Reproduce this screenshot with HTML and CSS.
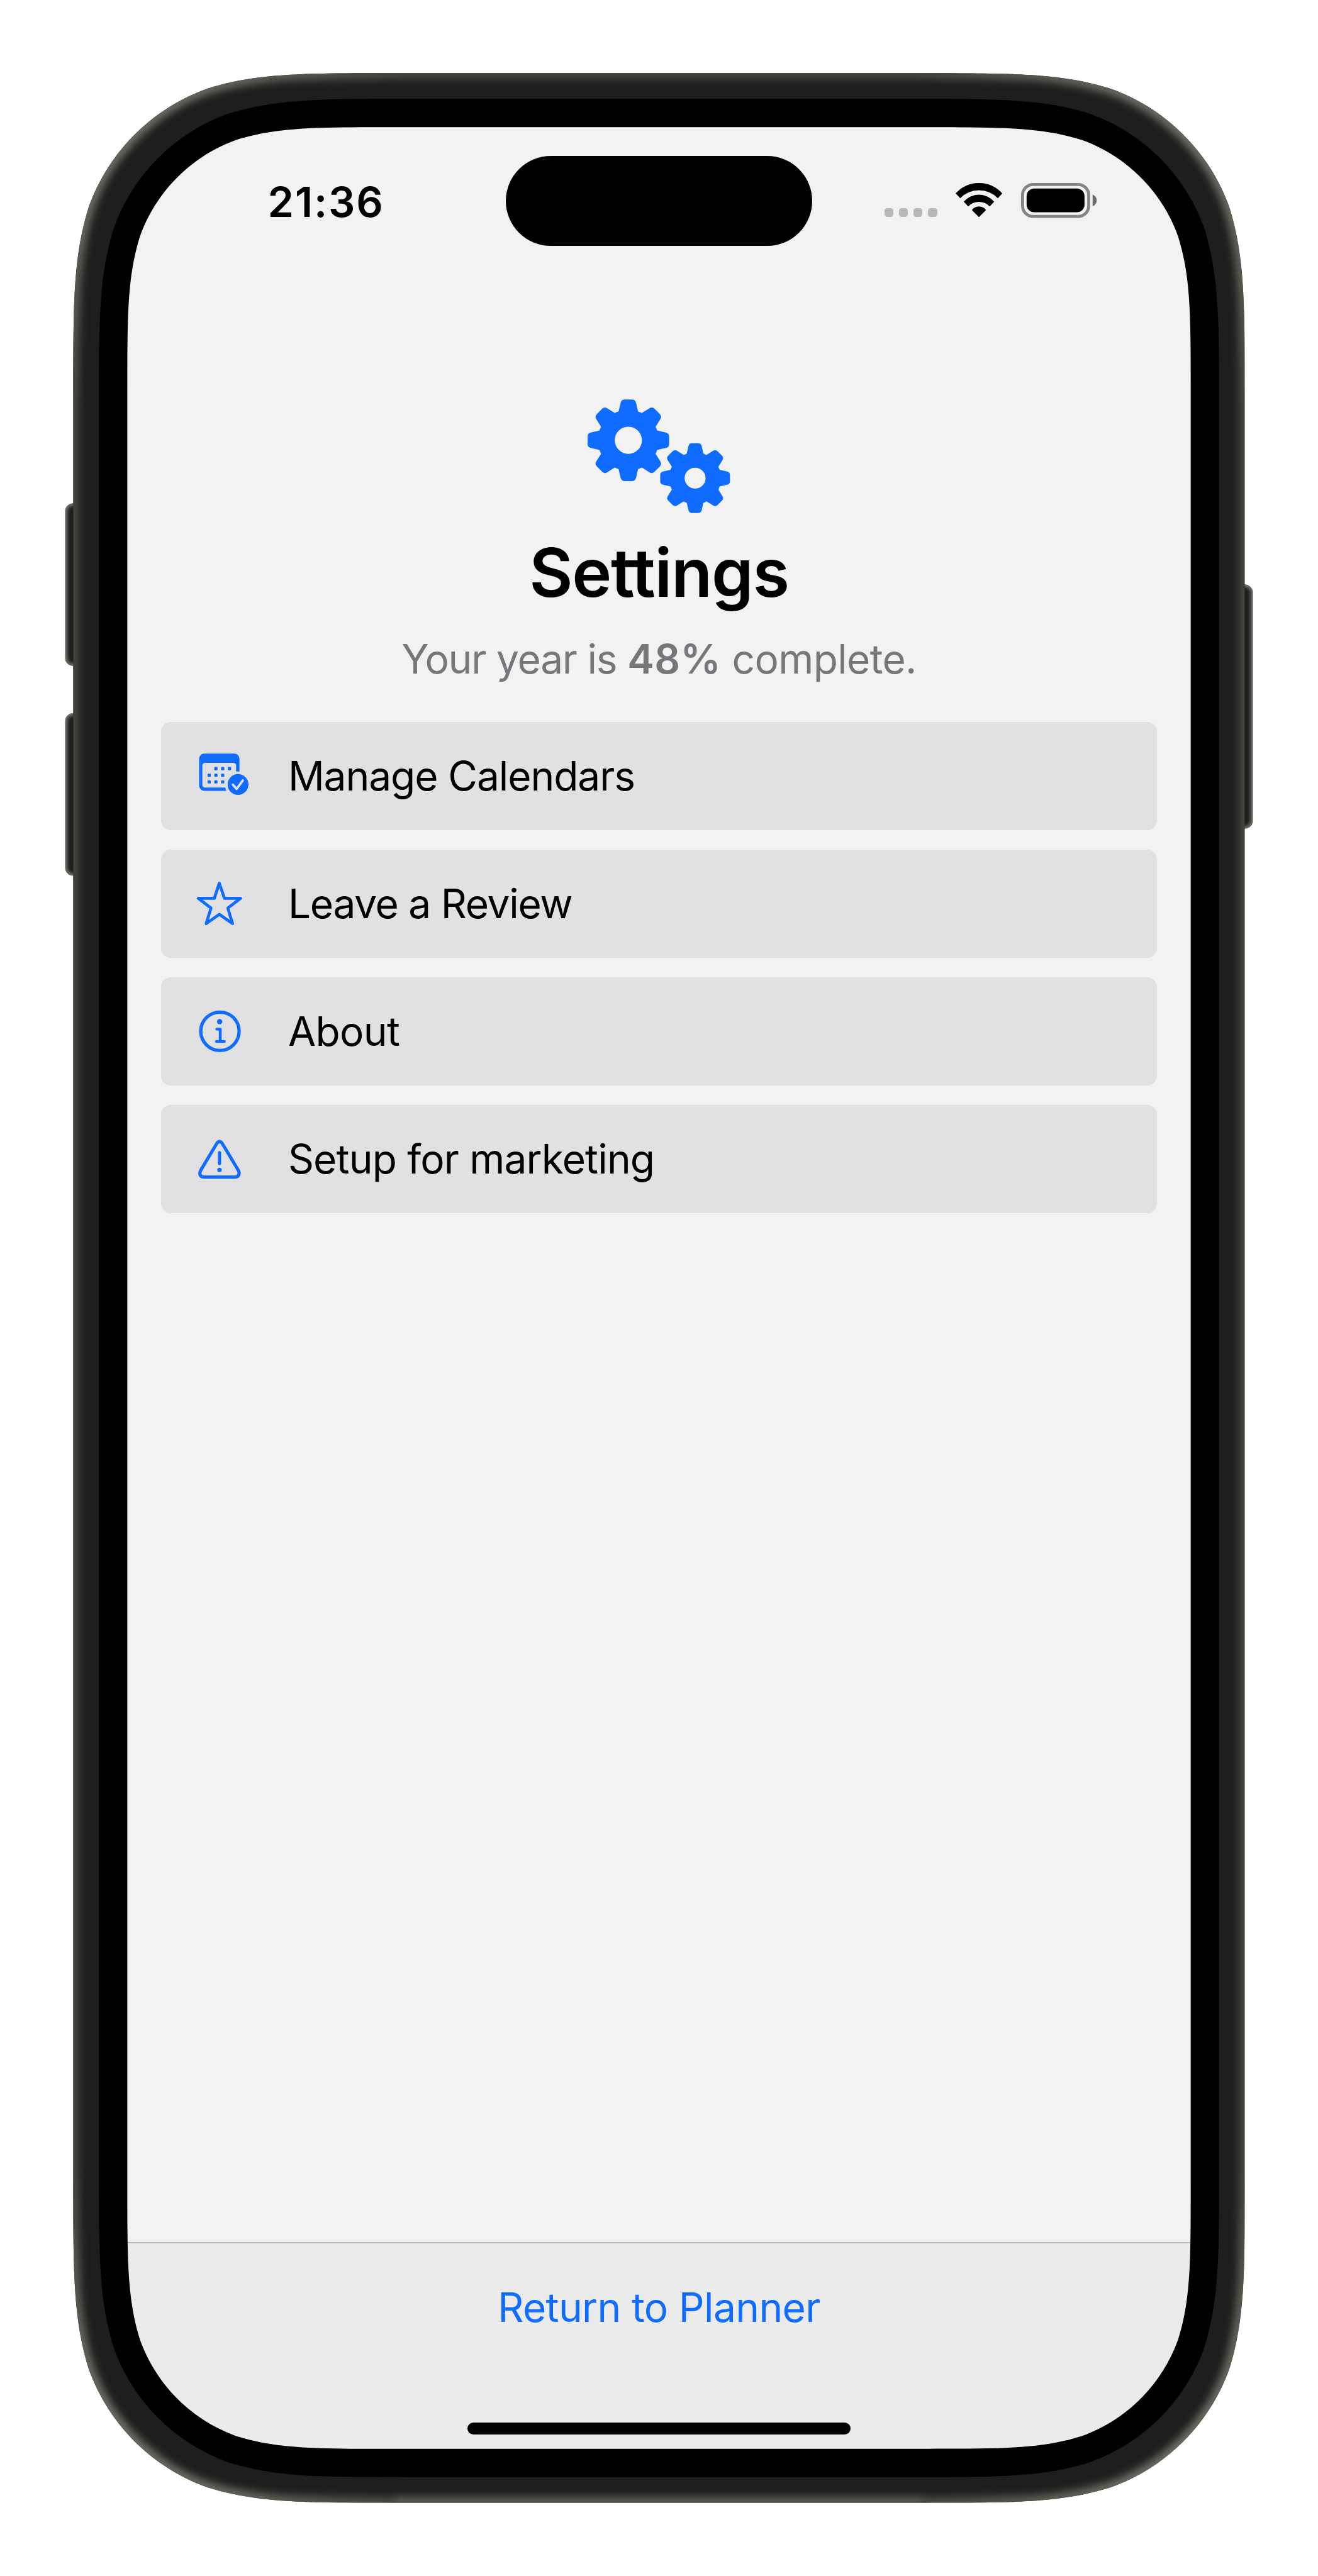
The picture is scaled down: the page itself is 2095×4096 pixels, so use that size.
FILE: index.html
```html
<!DOCTYPE html>
<html lang="en">
<head>
<meta charset="utf-8">
<title>Settings</title>
<link rel="stylesheet" href="styles.css">
</head>
<body>
<div class="device">
  <main class="screen">
    <header class="status-bar">
      <span class="time">21:36</span>
      <span class="island"></span>
      <span class="indicators">
        <span class="signal"><i></i><i></i><i></i><i></i></span>
        <svg class="wifi" viewBox="509 60 344 252">
          <path d="M509,137A230.6,230.6 0 0 1 853,137L820,172A194,194 0 0 0 543,172Z"/>
          <path d="M569,198A146.6,146.6 0 0 1 793,198L760,233A108.8,108.8 0 0 0 602,233Z"/>
          <path d="M629,260A63.6,63.6 0 0 1 733,260L681,312Z"/>
        </svg>
        <svg class="battery" viewBox="990 60 558 258">
          <rect x="1001" y="71" width="488" height="236" rx="78" fill="none" stroke="#848484" stroke-width="22"/>
          <rect x="1031" y="101" width="427" height="175" rx="56"/>
          <path d="M1518,146Q1548,160 1548,189T1518,232Z" fill="#6a6a6a"/>
        </svg>
      </span>
    </header>

    <section class="hero">
      <svg class="gears" viewBox="132 97 1051 840">
        <defs>
          <path id="tooth" d="M-72,-212L-57,-277Q-51,-301 -27,-301H27Q51,-301 57,-277L72,-212L60,-150H-60Z"/>
          <g id="teeth">
            <use href="#tooth"/><use href="#tooth" transform="rotate(45)"/><use href="#tooth" transform="rotate(90)"/><use href="#tooth" transform="rotate(135)"/><use href="#tooth" transform="rotate(180)"/><use href="#tooth" transform="rotate(225)"/><use href="#tooth" transform="rotate(270)"/><use href="#tooth" transform="rotate(315)"/>
          </g>
        </defs>
        <g transform="translate(432.5 399)"><use href="#teeth"/><circle class="ring" r="162" stroke-width="124"/></g>
        <g transform="translate(925 678.5)"><use href="#teeth" transform="scale(.855)"/><circle class="ring" r="134" stroke-width="114"/></g>
      </svg>
      <h1 class="title">Settings</h1>
      <p class="subtitle"><span>Your year is </span><b>48%</b> complete.</p>
    </section>

    <nav class="menu">
      <a class="row">
        <svg class="icon" viewBox="30 27 420 360">
          <path d="M358,174V80A38,38 0 0 0 320,42H98A38,38 0 0 0 60,80V279A38,38 0 0 0 98,317H262L252,293H104A20,20 0 0 1 84,273V130A20,20 0 0 1 104,110H313A20,20 0 0 1 333,130V174Z"/>
          <g>
            <rect x="172" y="141" width="24" height="24" rx="6"/><rect x="222" y="141" width="24" height="24" rx="6"/><rect x="272" y="141" width="24" height="24" rx="6"/>
            <rect x="122" y="190" width="24" height="24" rx="6"/><rect x="172" y="190" width="24" height="24" rx="6"/><rect x="222" y="190" width="24" height="24" rx="6"/>
            <rect x="122" y="239" width="24" height="24" rx="6"/><rect x="172" y="239" width="24" height="24" rx="6"/><rect x="222" y="239" width="24" height="24" rx="6"/>
          </g>
          <circle cx="347" cy="270" r="77"/>
          <path class="tick" d="M309,271L337,303L383,240"/>
        </svg>
        <span class="label calendars">Manage Calendars</span>
      </a>
      <a class="row">
        <svg class="icon" viewBox="30 969 420 360">
          <path class="line" stroke-width="22" d="M209,999L247,1110H366L272,1182L307,1297L209,1228L112,1297L148,1182L54,1110H172Z"/>
        </svg>
        <span class="label review">Leave a Review</span>
      </a>
      <a class="row">
        <svg class="icon" viewBox="480 2477 140 120">
          <circle class="line" cx="541.3" cy="2537" r="47.2" stroke-width="8.2"/>
          <circle cx="540.5" cy="2513.5" r="6.6"/>
          <path class="line" stroke-width="7" d="M533.5,2531.5H542V2562M532.5,2562H552"/>
        </svg>
        <span class="label about">About</span>
      </a>
      <a class="row">
        <svg class="icon" viewBox="480 2791 140 120">
          <path class="line" stroke-width="8" d="M533.5,2813Q540.2,2803.5 547,2813L586.5,2879C591,2888 587,2895.6 579,2895.6H501.5C493,2895.6 489,2888 494,2879Z"/>
          <path class="line" stroke-width="8" d="M540.2,2835.5V2862"/>
          <circle cx="540.2" cy="2878" r="5.5"/>
        </svg>
        <span class="label marketing">Setup for marketing</span>
      </a>
    </nav>

    <footer class="toolbar">
      <a class="return">Return to Planner</a>
      <span class="home-indicator"></span>
    </footer>
  </main>

  <svg class="frame" viewBox="0 0 3240 6336" preserveAspectRatio="none">
    <defs>
      <path id="body" d="M971.8,180H2268.2c228,0 342,0 464.7,38.8c134,48.8 239.5,154.3 288.3,288.3c38.8,122.7 38.8,236.7 38.8,464.7V5364.2c0,228 0,342 -38.8,464.7c-48.8,134 -154.3,239.5 -288.3,288.3c-122.7,38.8 -236.7,38.8 -464.7,38.8H971.8c-228,0 -342,0 -464.7,-38.8c-134,-48.8 -239.5,-154.3 -288.3,-288.3c-38.8,-122.7 -38.8,-236.7 -38.8,-464.7V971.8c0,-228 0,-342 38.8,-464.7c48.8,-134 154.3,-239.5 288.3,-288.3c122.7,-38.8 236.7,-38.8 464.7,-38.8z"/>
      <path id="glass" d="M958.1,313H2281.9c185.8,0 278.6,0 378.6,31.6c109.2,39.7 195.2,125.7 234.9,234.9c31.6,100 31.6,192.8 31.6,378.6V5377.9c0,185.8 0,278.6 -31.6,378.6c-39.7,109.2 -125.7,195.2 -234.9,234.9c-100,31.6 -192.8,31.6 -378.6,31.6H958.1c-185.8,0 -278.6,0 -378.6,-31.6c-109.2,-39.7 -195.2,-125.7 -234.9,-234.9c-31.6,-100 -31.6,-192.8 -31.6,-378.6V958.1c0,-185.8 0,-278.6 31.6,-378.6c39.7,-109.2 125.7,-195.2 234.9,-234.9c100,-31.6 192.8,-31.6 378.6,-31.6z"/>
      <path id="corner" d="M180,1100V971.8c0,-228 0,-342 38.8,-464.7c48.8,-134 154.3,-239.5 288.3,-288.3c122.7,-38.8 236.7,-38.8 464.7,-38.8H1100"/>
      <clipPath id="body-clip"><use href="#body"/></clipPath>
      <mask id="hole" maskUnits="userSpaceOnUse" x="0" y="0" width="3240" height="6336">
        <rect width="3240" height="6336" fill="#fff"/><use href="#glass" fill="#000"/>
      </mask>
      <radialGradient id="shine" gradientUnits="userSpaceOnUse" cx="240" cy="240" r="760">
        <stop offset="0" stop-color="#74756b"/><stop offset=".35" stop-color="#74756b" stop-opacity=".85"/><stop offset="1" stop-color="#74756b" stop-opacity="0"/>
      </radialGradient>
      <filter id="soft" color-interpolation-filters="sRGB" filterUnits="userSpaceOnUse" x="0" y="0" width="3240" height="6336"><feGaussianBlur stdDeviation="10"/></filter>
      <filter id="key-soft" color-interpolation-filters="sRGB" filterUnits="userSpaceOnUse" x="0" y="0" width="3240" height="6336"><feGaussianBlur stdDeviation="4"/></filter>
      <clipPath id="keys">
        <rect x="160" y="1238" width="60" height="400" rx="20"/><rect x="160" y="1754" width="60" height="400" rx="20"/><rect x="3020" y="1438" width="60" height="600" rx="20"/>
      </clipPath>
    </defs>
    <g mask="url(#hole)">
      <g clip-path="url(#keys)">
        <rect width="3240" height="6336" fill="#1e1e1e"/>
        <g fill="none" stroke="#75766c" stroke-width="11" filter="url(#key-soft)">
          <rect x="160" y="1238" width="60" height="400" rx="20"/><rect x="160" y="1754" width="60" height="400" rx="20"/><rect x="3020" y="1438" width="60" height="600" rx="20"/>
        </g>
      </g>
      <g clip-path="url(#body-clip)">
        <rect width="3240" height="6336" fill="#1e1e1e"/>
        <g fill="none" stroke-width="28" filter="url(#soft)">
          <use href="#body" stroke="#484943"/>
          <use href="#corner" stroke="url(#shine)"/>
          <use href="#corner" stroke="url(#shine)" transform="matrix(-1 0 0 1 3240 0)"/>
          <use href="#corner" stroke="url(#shine)" transform="matrix(1 0 0 -1 0 6336)"/>
          <use href="#corner" stroke="url(#shine)" transform="rotate(180 1620 3168)"/>
          <path d="M971,6156H2269" stroke="#61625b"/>
        </g>
      </g>
      <path d="M1007.3,243H2232.7c220.1,0 330.1,0 448.6,37.5c129.3,47 231.2,148.9 278.2,278.2c37.5,118.5 37.5,228.5 37.5,448.6V5328.7c0,220.1 0,330.1 -37.5,448.6c-47,129.3 -148.9,231.2 -278.2,278.2c-118.5,37.5 -228.5,37.5 -448.6,37.5H1007.3c-220.1,0 -330.1,0 -448.6,-37.5c-129.3,-47 -231.2,-148.9 -278.2,-278.2c-37.5,-118.5 -37.5,-228.5 -37.5,-448.6V1007.3c0,-220.1 0,-330.1 37.5,-448.6c47,-129.3 148.9,-231.2 278.2,-278.2c118.5,-37.5 228.5,-37.5 448.6,-37.5z"/>
    </g>
  </svg>
</div>
</body>
</html>
```
FILE: styles.css
```css
/* 1rem = 100 device pixels */
html { font-size: 64.65px; }
*, *::before, *::after { box-sizing: border-box; }
body {
  margin: 0;
  background: #fff;
  color: #000;
  font-family: Inter, "Liberation Sans", sans-serif;
  overflow: hidden;
}
svg { display: block; flex: none; }

.device {
  position: relative;
  width: 2095px;
  height: 4096px;
  display: flex;
  justify-content: center;
  padding-top: 3.13rem;
}
.frame { position: absolute; inset: 0; width: 100%; height: 100%; pointer-events: none; }

.screen {
  width: 26.14rem;
  height: 57.1rem;
  display: flex;
  flex-direction: column;
  background: #f2f2f2;
  clip-path: inset(0 round 3.6rem);
}

.status-bar {
  height: 3.6rem;
  padding-top: .7rem;
  display: grid;
  grid-template-columns: 9.31rem 7.52rem 9.31rem;
  align-items: start;
}
.time {
  padding: .54rem 0 0 3.45rem;
  font-size: 1.03rem;
  line-height: 1.2rem;
  font-weight: 600;
  letter-spacing: .028em;
}
.island { height: 2.22rem; border-radius: 1.11rem; background: #000; }
.indicators { display: flex; align-items: flex-end; height: 1.53rem; padding: 0 0 .02rem 1.78rem; }
.signal { display: flex; gap: .14rem; margin-right: .457rem; }
.signal i { width: .22rem; height: .22rem; border-radius: .07rem; background: #b8b8b8; }
.wifi { width: 1.147rem; height: .84rem; margin-right: .457rem; }
.battery { width: 1.86rem; height: .86rem; margin-bottom: -.02rem; }

.hero { display: flex; flex-direction: column; align-items: center; padding-top: 3.09rem; }
.gears { width: 3.503rem; height: 2.8rem; fill: #106bff; }
.ring { fill: none; stroke: #106bff; }
.title { margin: .47rem 0 0; font-size: 1.65rem; line-height: 2rem; font-weight: 600; letter-spacing: -.012em; }
.subtitle { margin: .51rem 0 0; font-size: .99rem; line-height: 1.2rem; color: #77777b; white-space: nowrap; letter-spacing: -.01em; }
.subtitle span { letter-spacing: -.019em; }
.subtitle b { font-weight: 600; letter-spacing: .006em; }

.menu { display: flex; flex-direction: column; gap: .48rem; padding: .96rem .83rem 0; }
.row {
  height: 2.66rem;
  display: flex;
  align-items: center;
  padding-left: .84rem;
  border-radius: .24rem;
  background: #e1e1e4;
}
.icon { width: 1.4rem; height: 1.2rem; fill: #106bff; }
.icon .line { fill: none; stroke: #106bff; stroke-linejoin: round; stroke-linecap: round; }
.icon .tick { fill: none; stroke: #e1e1e4; stroke-width: 17; stroke-linejoin: round; stroke-linecap: round; }
.label { margin-left: .88rem; font-size: .99rem; line-height: 1.2rem; letter-spacing: -.01em; white-space: nowrap; }
.calendars { letter-spacing: -.017em; }
.review { letter-spacing: -.02em; }
.marketing { letter-spacing: -.013em; }

.toolbar {
  margin-top: auto;
  height: 5.08rem;
  display: flex;
  flex-direction: column;
  align-items: center;
  background: #ebebeb;
  border-top: 2px solid #b8b8b8;
}
.return { margin-top: .97rem; font-size: .99rem; line-height: 1.2rem; color: #106bff; letter-spacing: -.01em; }
.home-indicator { margin-top: auto; margin-bottom: .35rem; width: 9.42rem; height: .3rem; border-radius: .15rem; background: #000; }
```
